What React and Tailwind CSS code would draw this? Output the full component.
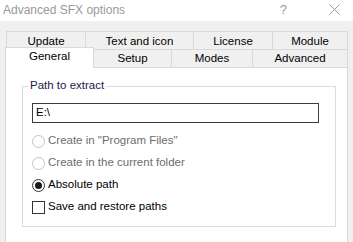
import React from "react";

const rowTabs = [
  { label: "Update", w: "w-[79px]" },
  { label: "Text and icon", w: "w-[108px]" },
  { label: "License", w: "w-[79px]" },
  { label: "Module", w: "w-[76px]", last: true },
];

const lowerTabs = [
  { label: "Setup", w: "w-[78px]" },
  { label: "Modes", w: "w-[81px]" },
  { label: "Advanced", w: "w-[95px]" },
];

function Radio({ label, checked, disabled }) {
  return (
    <div className="flex items-center h-[22px] pl-[9px] gap-[3px]">
      <span
        className={`w-[13px] h-[13px] rounded-full border bg-white flex items-center justify-center ${
          disabled ? "border-[#c4c4c4]" : "border-[#333333]"
        }`}
      >
        {checked && <span className="w-[7px] h-[7px] rounded-full bg-[#1a1a1a]"></span>}
      </span>
      <span className={disabled ? "text-[#6d6d6d]" : "text-black"}>{label}</span>
    </div>
  );
}

export default function App() {
  return (
    <div
      className="w-[353px] h-[242px] bg-[#f0f0f0] overflow-hidden text-[11.5px] leading-none"
      style={{ fontFamily: '"Liberation Sans", Arial, sans-serif' }}
    >
      {/* Title bar */}
      <div className="h-[21px] bg-white flex items-center pl-[3px] pb-[2px] text-[12px] text-[#999999]">
        <span>Advanced SFX options</span>
        <span className="ml-auto mr-[42px] text-[13px]">?</span>
        <svg width="11" height="11" viewBox="0 0 11 11" className="mr-[13px]">
          <path d="M0.5 0.5 L10.5 10.5 M10.5 0.5 L0.5 10.5" stroke="#999999" strokeWidth="1" />
        </svg>
      </div>

      {/* Tabs, upper row */}
      <div className="flex pl-[6px] pt-[10px]">
        {rowTabs.map((t) => (
          <div
            key={t.label}
            className={`${t.w} h-[18px] border-t border-l border-[#d9d9d9] flex items-center justify-center pt-[2px] text-black ${
              t.last ? "border-r" : ""
            }`}
          >
            {t.label}
          </div>
        ))}
      </div>

      {/* Tabs, lower row */}
      <div className="flex items-start pl-[5px] h-[18px]">
        <div className="relative z-10 w-[89px] h-[21px] -mt-[2px] bg-white border-t border-l border-r border-[#d9d9d9] flex items-center justify-center pb-[3px] text-black">
          General
        </div>
        {lowerTabs.map((t) => (
          <div
            key={t.label}
            className={`${t.w} h-[18px] border-t border-r border-[#d9d9d9] flex items-center justify-center pt-[1px] text-black`}
          >
            {t.label}
          </div>
        ))}
      </div>

      {/* Panel */}
      <div className="ml-[5px] w-[343px] h-[200px] bg-white border border-[#d9d9d9] pl-[16px] pt-[18px]">
        <div className="relative w-[314px] h-[141px] border border-[#dcdcdc]">
          <span className="absolute -top-[7px] left-[5px] bg-white px-[2px] text-[#1a1a4a]">
            Path to extract
          </span>
          <div className="ml-[9px] mt-[16px] w-[287px] h-[20px] border border-[#3c3c3c] flex items-center pl-[3px] text-black">
            E:\
          </div>
          <div className="mt-[7px]">
            <Radio label={'Create in "Program Files"'} disabled />
            <Radio label="Create in the current folder" disabled />
            <Radio label="Absolute path" checked />
            <div className="flex items-center h-[22px] pl-[9px] gap-[3px]">
              <span className="w-[13px] h-[13px] border border-[#333333] bg-white"></span>
              <span className="text-black">Save and restore paths</span>
            </div>
          </div>
        </div>
      </div>
    </div>
  );
}
